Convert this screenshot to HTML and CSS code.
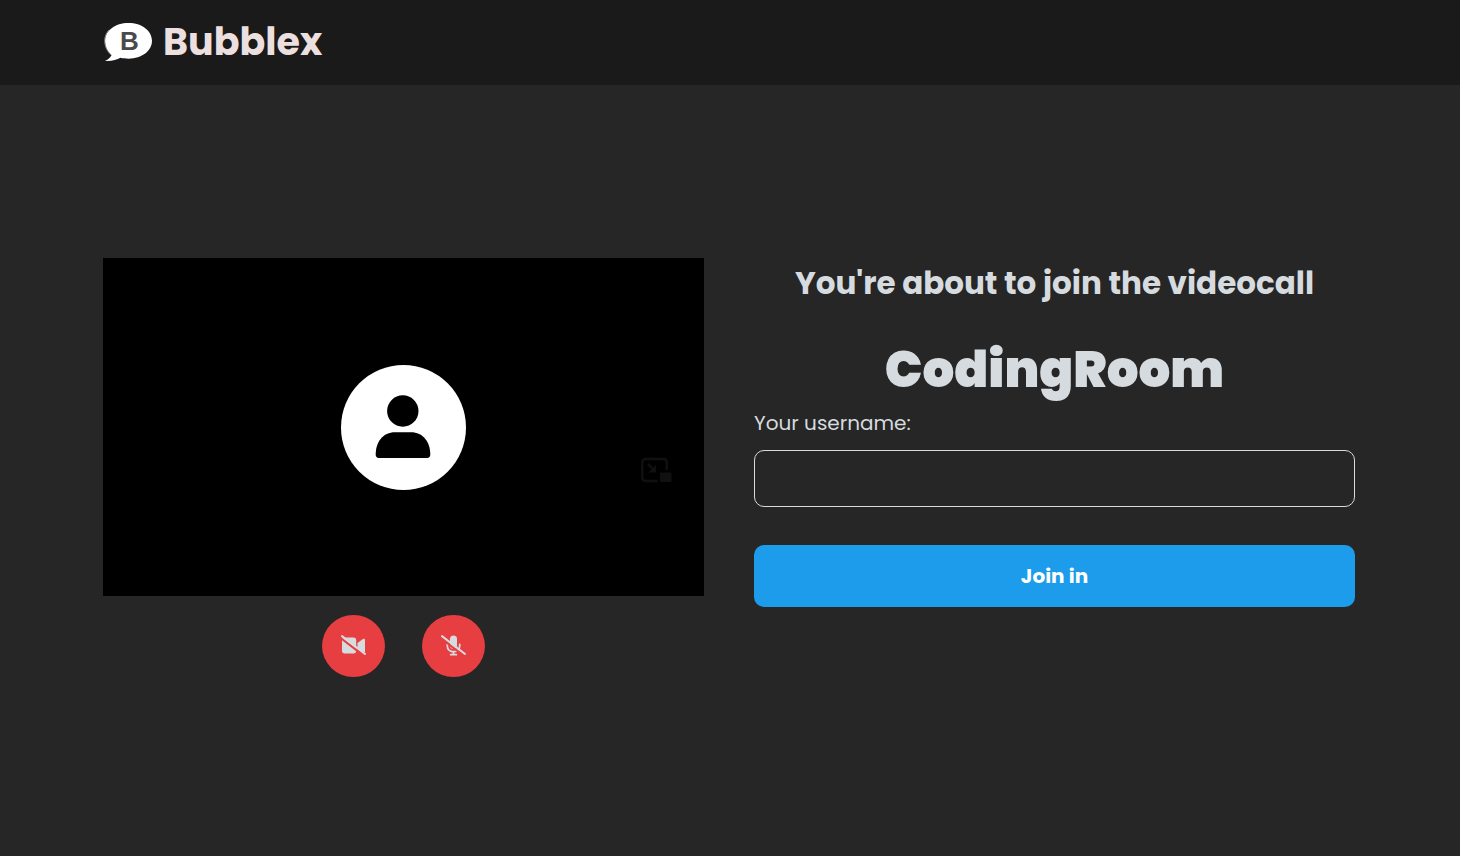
FILE: index.html
```
<!DOCTYPE html>
<html lang="en">
<head>
  <meta charset="utf-8">
  <meta name="viewport" content="width=device-width, initial-scale=1">
  <title>Bubblex</title>
  <link rel="stylesheet" href="styles.css">
</head>
<body>
  <header class="header">
    <a class="brand" href="#">
      <svg class="brand-logo" viewBox="0 0 50 40" aria-hidden="true">
        <path fill="#fff" d="M25.500 1C39 1 49 8.800 49 18.800S39 36.700 25.500 36.700c-3 0-5.500-.3-8-.9C13.500 38 8.500 39.500 2 39c3.500-1.500 5.500-3.500 6.500-5.900C4.300 29.700 2 24.500 2 18.800 2 8.800 12 1 25.500 1Z"/>
        <path fill="none" stroke="#8a8a8a" d="M8.300 33C4 29.500 1.700 24 1.700 18.800c0-4.300 1.600-8 4.500-11"/>
        <text class="brand-letter" x="26.500" y="28" text-anchor="middle">B</text>
      </svg>
      <span class="brand-name">Bubblex</span>
    </a>
  </header>

  <main class="lobby">
    <section class="preview" aria-label="Camera preview">
      <div class="video">
        <svg class="avatar" viewBox="0 0 125 125" aria-hidden="true">
          <circle cx="62.500" cy="62.500" r="62.500" fill="#fff"/>
          <circle cx="61.800" cy="46" r="15.700"/>
          <path d="M54 67.300h16c12 0 19.300 9.500 19.300 22.500 0 2-1.200 3.200-3.200 3.200H37.800c-2 0-3.100-1.200-3.100-3.200 0-13 7.300-22.500 19.300-22.500Z"/>
        </svg>
        <svg class="pip" viewBox="0 0 32 26" aria-hidden="true">
          <path fill="none" stroke="#101010" stroke-width="2.500" d="M17.500 24H5.500c-2 0-3.200-1.200-3.200-3.200V5.200C2.300 3.200 3.500 2 5.500 2h18c2 0 3.200 1.200 3.200 3.200V13M8 7l6 6"/>
          <path fill="#101010" d="M16 8v7.500H8.500ZM21 15.500h9.500c.6 0 1 .4 1 1V24c0 .6-.4 1-1 1H21c-.6 0-1-.4-1-1v-7.500c0-.6.4-1 1-1Z"/>
        </svg>
      </div>
      <div class="controls">
        <button class="toggle" type="button" aria-label="Turn camera on">
          <svg class="toggle-icon" viewBox="0 0 26 22" aria-hidden="true">
            <path fill="#d6dbdf" d="M3 2.500h9.500c1.700 0 2.700 1 2.700 2.700v10.600c0 1.700-1 2.700-2.700 2.700H3.700C2 18.500 1 17.500 1 15.800V4.500c0-1.100.8-2 2-2ZM16.500 8 22 4c1-.7 2-.2 2 1v11.500c0 1.200-1 1.700-2 1l-5.500-4Z"/>
            <path fill="none" stroke="#e63e41" stroke-width="2" d="M-.5 2.800 23.200 21.100"/>
            <path fill="none" stroke="#d6dbdf" stroke-width="2" stroke-linecap="round" d="M1 1.100 24 19"/>
          </svg>
        </button>
        <button class="toggle" type="button" aria-label="Turn microphone on">
          <svg class="toggle-icon" viewBox="0 0 26 22" aria-hidden="true">
            <rect x="9" y=".5" width="7" height="13.500" rx="3.500" fill="#d6dbdf"/>
            <path fill="none" stroke="#d6dbdf" stroke-width="1.800" stroke-linecap="round" d="M6.300 9.500v1.200c0 3.600 2.600 6 6.200 6s6.200-2.400 6.200-6V9.500M12.500 16.700v3M9.700 19.700h5.600"/>
            <path fill="none" stroke="#e63e41" stroke-width="2" d="M-.5 2.800 23.200 21.100"/>
            <path fill="none" stroke="#d6dbdf" stroke-width="2" stroke-linecap="round" d="M1 1.100 24 19"/>
          </svg>
        </button>
      </div>
    </section>

    <form class="join">
      <h2 class="join-title">You're about to join the videocall</h2>
      <h1 class="room-name">CodingRoom</h1>
      <label class="join-label" for="username">Your username:</label>
      <input class="join-input" id="username" name="username" type="text">
      <button class="join-button" type="submit">Join in</button>
    </form>
  </main>
</body>
</html>
```
FILE: styles.css
```
* {
  box-sizing: border-box;
}

body {
  display: flex;
  flex-direction: column;
  min-height: 100vh;
  margin: 0;
  background: #262626;
  color: #d6dbdf;
  font-family: Poppins, Inter, sans-serif;
}

.header {
  padding: 18px 103px 19px;
  background: #1a1a1a;
}

.brand {
  display: inline-flex;
  align-items: center;
  gap: 10px;
  height: 48px;
  color: #ecdfdf;
  text-decoration: none;
  vertical-align: top;
}

.brand-logo {
  width: 50px;
  height: 40px;
}

.brand-letter {
  fill: #4a4a4a;
  font-family: "Liberation Sans", sans-serif;
  font-size: 26px;
  font-weight: 700;
}

.brand-name {
  font-size: 38px;
  font-weight: 700;
  line-height: 48px;
}

.lobby {
  display: grid;
  flex: 1;
  grid-template-columns: 1fr 1fr;
  align-content: center;
  gap: 50px;
  padding: 0 105px 0 103px;
}

.video {
  position: relative;
  display: flex;
  align-items: center;
  justify-content: center;
  aspect-ratio: 16 / 9;
  background: #000;
}

.avatar {
  width: 125px;
  height: 125px;
}

.pip {
  position: absolute;
  right: 32px;
  bottom: 113px;
  width: 32px;
  height: 26px;
}

.controls {
  display: flex;
  justify-content: center;
  gap: 37px;
  padding: 19px 0 6px;
}

.toggle {
  display: flex;
  align-items: center;
  justify-content: center;
  width: 63px;
  height: 62px;
  padding: 0;
  border: 0;
  border-radius: 50%;
  background: #e63e41;
  cursor: pointer;
}

.toggle-icon {
  width: 26px;
  height: 22px;
}

.join {
  display: flex;
  flex-direction: column;
}

.join-title {
  margin: 0;
  font-size: 31px;
  font-weight: 700;
  line-height: 50px;
  text-align: center;
}

.room-name {
  margin: 24px 0 0;
  font-size: 50px;
  font-weight: 900;
  line-height: 76px;
  text-align: center;
}

.join-label {
  font-size: 20px;
  line-height: 30px;
}

.join-input {
  height: 57px;
  margin: 12px 0 38px;
  padding: 0 16px;
  border: 1px solid #d6dbdf;
  border-radius: 10px;
  background: transparent;
  color: inherit;
  font: inherit;
  font-size: 20px;
}

.join-button {
  height: 62px;
  border: 0;
  border-radius: 10px;
  background: #1c9cea;
  color: #fff;
  font: inherit;
  font-size: 20px;
  font-weight: 700;
  cursor: pointer;
}

@media (max-width: 900px) {
  .header {
    padding: 18px 24px 19px;
  }

  .lobby {
    grid-template-columns: 1fr;
    padding: 24px;
  }
}
```
